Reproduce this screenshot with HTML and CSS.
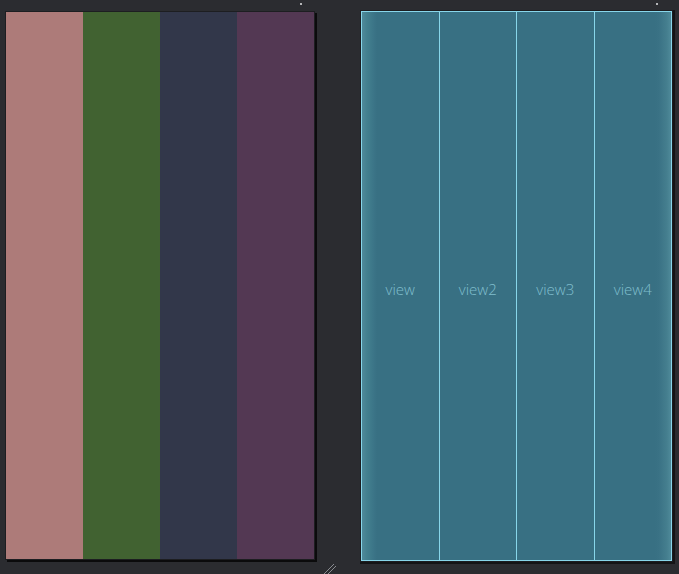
FILE: index.html
```html
<!DOCTYPE html>
<html>
<head>
<meta charset="utf-8">
<link rel="stylesheet" href="styles.css">
</head>
<body>
<div class="stage">
  <div class="panel left">
    <div class="col pink"></div>
    <div class="col green"></div>
    <div class="col navy"></div>
    <div class="col plum"></div>
  </div>
  <div class="panel right">
    <div class="vcol">view</div>
    <div class="vcol">view2</div>
    <div class="vcol">view3</div>
    <div class="vcol">view4</div>
  </div>
  <span class="dot dot1"></span>
  <span class="dot dot2"></span>
  <svg class="grip" width="14" height="14" viewBox="0 0 14 14">
    <line x1="1" y1="13" x2="11" y2="3" stroke="#8a8c90" stroke-width="1"/>
    <line x1="5" y1="13" x2="13" y2="5" stroke="#8a8c90" stroke-width="1"/>
  </svg>
</div>
</body>
</html>
```
FILE: styles.css
```css
html, body {
  margin: 0;
  padding: 0;
  background: #2b2c30;
  width: 679px;
  height: 574px;
  overflow: hidden;
}
.stage {
  position: relative;
  display: flex;
  align-items: flex-start;
  width: 679px;
  height: 574px;
  box-sizing: border-box;
  padding: 11px 0 0 6px;
}
.panel.left {
  display: flex;
  margin-top: 1px;
  width: 308px;
  height: 547px;
  box-shadow: 0 0 0 1px #1d1e21, 2px 2px 0 1px #0b0b0c;
}
.col { flex: 1; }
.pink { background: #ad7b79; }
.green { background: #416231; }
.navy { background: #32374a; }
.plum { background: #533853; }

.panel.right {
  display: flex;
  margin-left: 47px;
  width: 311px;
  height: 550px;
  box-sizing: border-box;
  border: 1px solid #88d6ea;
  background: #387083;
  box-shadow: 0 0 0 1px #1c1d20, 1px 1px 0 2px #141416;
  font-family: "Open Sans", "Noto Sans", sans-serif;
  font-weight: 300;
  font-size: 15px;
  color: #80bfce;
}
.vcol {
  flex: 1;
  display: flex;
  align-items: center;
  justify-content: center;
  padding-top: 6px;
  border-left: 1px solid #88d6ea;
}
.vcol:first-child {
  border-left: none;
  background: linear-gradient(to right, #4f8a9a 0px, #43808f 5px, #3b7487 12px, #387083 15px);
}
.vcol:last-child {
  background: linear-gradient(to left, #4f8a9a 0px, #457f8f 4px, #3a7285 12px, #387083 16px);
}
.dot {
  position: absolute;
  width: 2px;
  height: 2px;
  background: #b5b6b8;
  top: 3px;
}
.dot1 { left: 300px; }
.dot2 { left: 656px; }
.grip {
  position: absolute;
  left: 323px;
  top: 561px;
}
```
